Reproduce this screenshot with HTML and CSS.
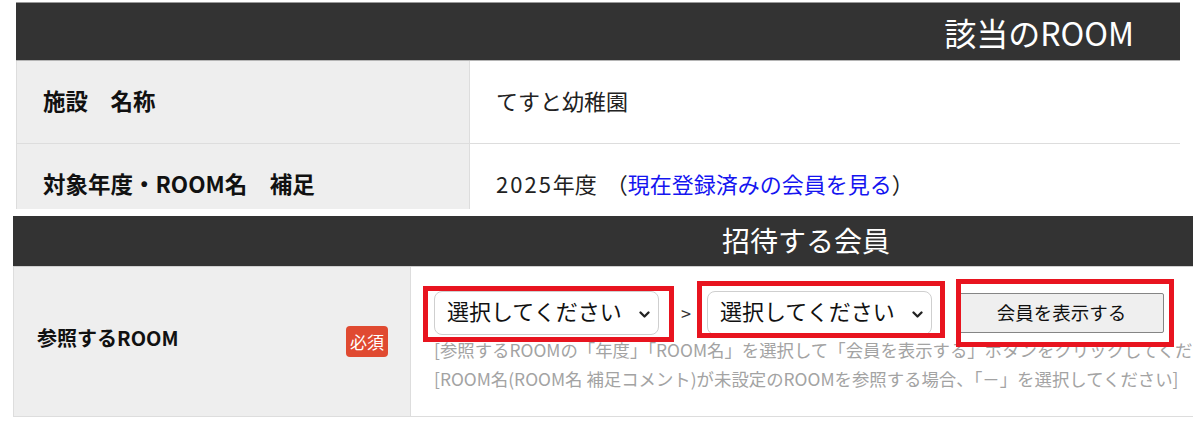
FILE: index.html
```html
<!DOCTYPE html>
<html lang="ja">
<head>
<meta charset="utf-8">
<title>ROOM</title>
<link rel="stylesheet" href="styles.css">
</head>
<body>
<section class="sec1">
  <div class="head head1">該当のROOM</div>
  <div class="row1">
    <div class="lab">施設　名称</div>
    <div class="val">てすと幼稚園</div>
  </div>
  <div class="row1">
    <div class="lab">対象年度・ROOM名　補足</div>
    <div class="val"><span class="year">2025</span>年度&nbsp;<span class="paren-open">（</span><a class="link" href="#">現在登録済みの会員を見る</a><span>）</span></div>
  </div>
</section>

<section class="sec2">
  <div class="head head2">招待する会員</div>
  <div class="row2">
    <div class="lab2">
      <span class="labtext">参照するROOM</span>
      <span class="badge">必須</span>
    </div>
    <div class="val2">
      <div class="controls">
        <div class="sel">
          <span>選択してください</span>
          <svg class="chev" width="11" height="7" viewBox="0 0 11 7"><path d="M1.5 1.5 L5.5 5.5 L9.5 1.5" fill="none" stroke="#222" stroke-width="2.3" stroke-linecap="round" stroke-linejoin="round"/></svg>
        </div>
        <span class="gt">&gt;</span>
        <div class="sel">
          <span>選択してください</span>
          <svg class="chev" width="11" height="7" viewBox="0 0 11 7"><path d="M1.5 1.5 L5.5 5.5 L9.5 1.5" fill="none" stroke="#222" stroke-width="2.3" stroke-linecap="round" stroke-linejoin="round"/></svg>
        </div>
        <button class="btn" type="button">会員を表示する</button>
      </div>
      <p class="help">[参照するROOMの「年度」「ROOM名」を選択して「会員を表示する」ボタンをクリックしてください]</p>
      <p class="help">[ROOM名(ROOM名 補足コメント)が未設定のROOMを参照する場合、「－」を選択してください]</p>
      <div class="mark mark1"></div>
      <div class="mark mark2"></div>
      <div class="mark mark3"></div>
    </div>
  </div>
</section>
</body>
</html>
```

FILE: styles.css
```css
html, body {
  margin: 0;
  padding: 0;
  overflow: hidden;
  background: #fff;
}
body {
  font-family: "Noto Sans CJK JP", "Noto Sans", sans-serif;
  color: #222;
}

.head {
  background: #333333;
  color: #fff;
  display: flex;
  align-items: center;
  box-sizing: border-box;
}

/* section 1 */
.sec1 {
  margin: 2px 0 0 16px;
  width: 1164px;
  height: 207px;
  overflow: hidden;
}
.head1 {
  height: 59px;
  border-top: 1px solid #9a9a9a;
  border-bottom: 1px solid #b5b5b5;
  justify-content: flex-end;
  padding-right: 46px;
  font-size: 32px;
  line-height: 1;
}
.row1 {
  display: grid;
  grid-template-columns: 454px 1fr;
  height: 83px;
  box-sizing: border-box;
  border-bottom: 1px solid #dddddd;
}
.lab {
  background: #eeeeee;
  border-left: 1px solid #dddddd;
  border-right: 1px solid #dddddd;
  display: flex;
  align-items: center;
  padding: 0 0 5px 26px;
  font-size: 22.5px;
  font-weight: 700;
  color: #111;
}
.val {
  display: flex;
  align-items: center;
  padding: 0 0 5px 26px;
  font-size: 22px;
  color: #222;
  white-space: pre;
}
.year {
  letter-spacing: 2px;
}
.paren-open {
  margin-left: 4px;
}
.link {
  color: #1515f0;
  text-decoration: none;
}

/* section 2 */
.sec2 {
  margin: 7px 0 0 13px;
  width: 1586px;
}
.head2 {
  height: 51px;
  border-bottom: 1px solid #cfcfcf;
  justify-content: center;
  font-size: 28px;
  line-height: 1;
  padding-bottom: 2px;
}
.row2 {
  display: grid;
  grid-template-columns: 398px 1fr;
  height: 150px;
  box-sizing: border-box;
  border-bottom: 1px solid #dddddd;
}
.lab2 {
  background: #eeeeee;
  border-left: 1px solid #dddddd;
  border-right: 1px solid #dddddd;
  display: flex;
  align-items: center;
  justify-content: space-between;
  padding: 0 22px 0 23px;
}
.labtext {
  font-size: 20px;
  font-weight: 700;
  color: #111;
  margin-top: -8px;
}
.badge {
  background: #e04a31;
  color: #fff;
  font-size: 17px;
  border-radius: 4px;
  width: 42px;
  height: 31px;
  display: flex;
  align-items: center;
  justify-content: center;
  line-height: 1;
}
.val2 {
  position: relative;
  padding: 24px 0 0 23px;
}
.controls {
  display: flex;
  align-items: center;
  height: 44px;
}
.sel {
  box-sizing: border-box;
  width: 225px;
  height: 44px;
  border: 1px solid #cfcfcf;
  border-radius: 8px;
  background: #fff;
  display: flex;
  align-items: center;
  justify-content: space-between;
  padding: 0 8px 6px 12px;
  font-size: 22px;
  color: #111;
}
.chev {
  display: block;
  margin-top: 9px;
}
.gt {
  font-size: 18px;
  color: #333;
  margin: 0 16px 0 22px;
}
.btn {
  box-sizing: border-box;
  margin-left: 27px;
  width: 205px;
  height: 40px;
  background: #efefef;
  border: 1px solid #858585;
  border-radius: 2px;
  font-family: inherit;
  font-size: 18.5px;
  color: #111;
  padding: 0 0 3px;
}
.help {
  margin: 0;
  font-size: 17.4px;
  line-height: 29px;
  color: #a3a3a3;
  white-space: nowrap;
}

/* annotation boxes */
.mark {
  position: absolute;
  border: 5px solid #e8141f;
  box-sizing: border-box;
}
.mark1 {
  left: 12px;
  top: 19px;
  width: 251px;
  height: 56px;
}
.mark2 {
  left: 286px;
  top: 14px;
  width: 248px;
  height: 57px;
}
.mark3 {
  left: 545px;
  top: 12px;
  width: 218px;
  height: 68px;
}
```
